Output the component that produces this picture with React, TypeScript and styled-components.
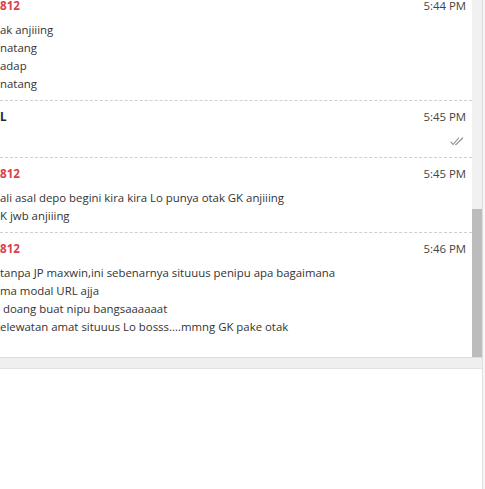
import { useLayoutEffect, useRef, useState } from 'react';
import styled, { createGlobalStyle } from 'styled-components';

type Message = {
  id: number;
  name: string;
  time: string;
  lines: string[];
  isAdmin?: boolean;
  read?: boolean;
};

const earlier: Message[] = [
  { id: 1, name: 'member812', time: '5:40 PM', lines: ['bosss', 'ini gimana sih', 'udah depo dari tadi', 'belum masuk juga'] },
  { id: 2, name: 'CS PORTAL', time: '5:41 PM', lines: ['Mohon ditunggu sebentar ya bosku', 'sedang kami cek terlebih dahulu', 'terima kasih'], isAdmin: true },
  { id: 3, name: 'member812', time: '5:42 PM', lines: ['lama amat', 'cepetan'] },
  { id: 4, name: 'member812', time: '5:43 PM', lines: ['udah 30 menit', 'gak ada kabar', 'gimana ini', 'situs apaan', 'bikin emosi aja'] },
  { id: 5, name: 'member812', time: '5:43 PM', lines: ['jawab dong', 'admin'] },
];

const visible: Message[] = [
  { id: 6, name: '812', time: '5:44 PM', lines: ['ak anjiiing', 'natang', 'adap', 'natang'] },
  { id: 7, name: 'L', time: '5:45 PM', lines: [], isAdmin: true, read: true },
  { id: 8, name: '812', time: '5:45 PM', lines: ['ali asal depo begini kira kira Lo punya otak GK anjiiing', 'K jwb anjiiing'] },
  {
    id: 9,
    name: '812',
    time: '5:46 PM',
    lines: [
      'tanpa JP maxwin,ini sebenarnya situuus penipu apa bagaimana',
      'ma modal URL ajja',
      '\u00a0doang buat nipu bangsaaaaaat',
      'elewatan amat situuus Lo bosss....mmng GK pake otak',
    ],
  },
];

const ReadIcon = () => (
  <svg width="14" height="9" viewBox="0 0 14 9" fill="none" stroke="#8a8a8a" strokeWidth="1.1" strokeLinecap="round">
    <path d="M1 5.2 L3 7.5 L8.6 1" />
    <path d="M5.6 7.3 L6 7.6 L12.6 1" />
  </svg>
);

const App = () => {
  const listRef = useRef<HTMLDivElement>(null);
  const [thumb, setThumb] = useState(148);

  useLayoutEffect(() => {
    const el = listRef.current;
    if (el) {
      el.scrollTop = el.scrollHeight;
      setThumb(Math.round((el.clientHeight * el.clientHeight) / el.scrollHeight));
    }
  }, []);

  const all = [...earlier, ...visible];

  return (
    <>
      <GlobalStyle />
      <Page>
        <ChatPanel>
          <ListRow>
            <MessageList ref={listRef}>
              {all.map((msg, i) => (
                <MessageItem key={msg.id} $last={i === all.length - 1}>
                  <MessageHead>
                    <Sender $admin={!!msg.isAdmin}>{msg.name}</Sender>
                    <Time>{msg.time}</Time>
                  </MessageHead>
                  {msg.read ? (
                    <Status>
                      <ReadIcon />
                    </Status>
                  ) : (
                    <Body>
                      {msg.lines.map((line, j) => (
                        <p key={j}>{line}</p>
                      ))}
                    </Body>
                  )}
                </MessageItem>
              ))}
            </MessageList>
            <ScrollTrack>
              <ScrollThumb style={{ height: thumb }} />
            </ScrollTrack>
          </ListRow>
          <Splitter />
          <InputArea />
        </ChatPanel>
      </Page>
    </>
  );
};

const GlobalStyle = createGlobalStyle`
  html, body {
    margin: 0;
    padding: 0;
    height: 100%;
    background: #f7f7f7;
    font-family: 'Open Sans', 'Noto Sans', sans-serif;
  }
  #root {
    height: 100%;
  }
  * {
    box-sizing: border-box;
  }
`;

const Page = styled.div`
  display: flex;
  height: 100vh;
  overflow: hidden;
`;

const ChatPanel = styled.div`
  width: 483px;
  display: flex;
  flex-direction: column;
  background-color: #fff;
  border-right: 1px solid #dedede;
`;

const ListRow = styled.div`
  display: flex;
  height: 357px;
  flex-shrink: 0;
`;

const MessageList = styled.div`
  flex: 1;
  min-width: 0;
  overflow: hidden;
  padding: 10px 0 14px;
`;

const ScrollTrack = styled.div`
  width: 10px;
  flex-shrink: 0;
  display: flex;
  flex-direction: column;
  justify-content: flex-end;
  background-color: #f1f1f1;
`;

const ScrollThumb = styled.div`
  width: 100%;
  background-color: #bcbcbc;
`;

const MessageItem = styled.div<{ $last: boolean }>`
  padding: 8px 6px 7px 0;
  border-bottom: ${p => (p.$last ? 'none' : '1px dashed #cfcfcf')};
`;

const MessageHead = styled.div`
  display: flex;
  justify-content: space-between;
  align-items: center;
  height: 16px;
  line-height: 16px;
`;

const Sender = styled.span<{ $admin: boolean }>`
  font-size: 11.6px;
  font-weight: 700;
  color: ${p => (p.$admin ? '#222' : '#d9414b')};
`;

const Time = styled.span`
  font-size: 11.4px;
  color: #444;
`;

const Body = styled.div`
  margin-top: 7px;
  p {
    margin: 0;
    font-size: 11.4px;
    line-height: 18px;
    color: #333;
    white-space: nowrap;
  }
`;

const Status = styled.div`
  margin-top: 7px;
  height: 18px;
  display: flex;
  justify-content: flex-end;
  align-items: center;
  padding-right: 2px;
`;

const Splitter = styled.div`
  height: 12px;
  flex-shrink: 0;
  background-color: #efefef;
  border-top: 1px solid #dcdcdc;
  border-bottom: 1px solid #e2e2e2;
`;

const InputArea = styled.div`
  flex: 1;
  background-color: #fff;
`;

export default App;
